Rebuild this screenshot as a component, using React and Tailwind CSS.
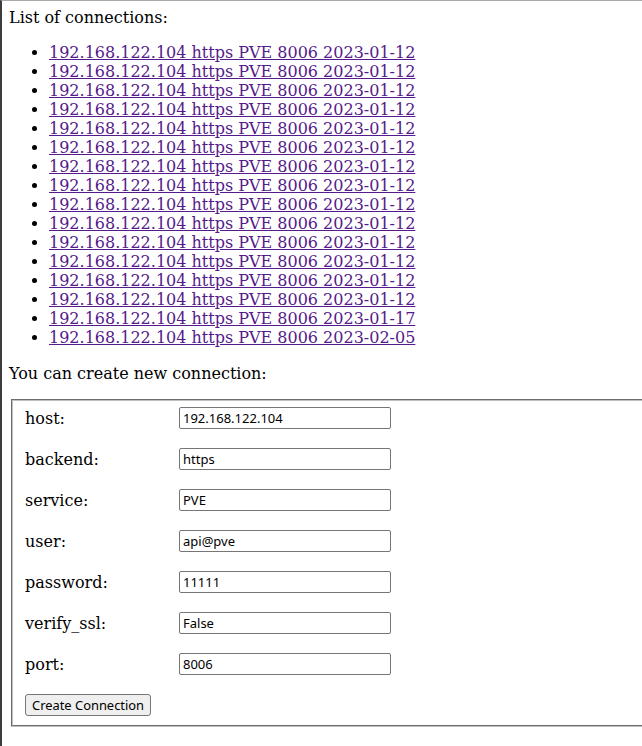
export default function App() {
  const dates = [
    "2023-01-12","2023-01-12","2023-01-12","2023-01-12","2023-01-12","2023-01-12","2023-01-12","2023-01-12",
    "2023-01-12","2023-01-12","2023-01-12","2023-01-12","2023-01-12","2023-01-12","2023-01-17","2023-02-05",
  ];
  const fields = [
    ["host:", "192.168.122.104"],
    ["backend:", "https"],
    ["service:", "PVE"],
    ["user:", "api@pve"],
    ["password:", "11111"],
    ["verify_ssl:", "False"],
    ["port:", "8006"],
  ];
  const serif = { fontFamily: '"DejaVu Serif", serif' };
  return (
    <div
      className="w-[642px] h-[746px] overflow-hidden bg-white border-l-2 border-l-[#3c3c3c] border-t border-t-[#a9a9a9] text-black text-[16px] leading-[19px]"
      style={serif}
    >
      <div className="pl-[7px] pt-[7px] w-[700px]">
        <p>List of connections:</p>
        <ul className="mt-[16px] pl-[40px] list-disc">
          {dates.map((d, i) => (
            <li key={i}>
              <a href="#" className="text-[#551a8b] underline">
                192.168.122.104 https PVE 8006 {d}
              </a>
            </li>
          ))}
        </ul>
        <p className="mt-[17px]">You can create new connection:</p>
        <div className="mt-[16px] ml-[2px] border-2 [border-style:groove] border-[#c0c0c0] pl-[12px] pt-[6px] pb-[9px]">
          <div className="flex flex-col gap-[19px]">
            {fields.map(([label, value]) => (
              <div key={label} className="flex items-center h-[22px]">
                <span className="w-[154px]">{label}</span>
                <input
                  defaultValue={value}
                  className="w-[212px] h-[22px] border border-[#767676] rounded-[2px] px-[3px] text-[13px] text-black outline-none"
                  style={{ fontFamily: '"Noto Sans", sans-serif' }}
                />
              </div>
            ))}
            <div>
              <button
                className="h-[22px] px-[6px] bg-[#efefef] border border-[#767676] rounded-[3px] text-[12.9px] leading-[18px] text-black"
                style={{ fontFamily: '"Noto Sans", sans-serif' }}
              >
                Create Connection
              </button>
            </div>
          </div>
        </div>
      </div>
    </div>
  );
}
